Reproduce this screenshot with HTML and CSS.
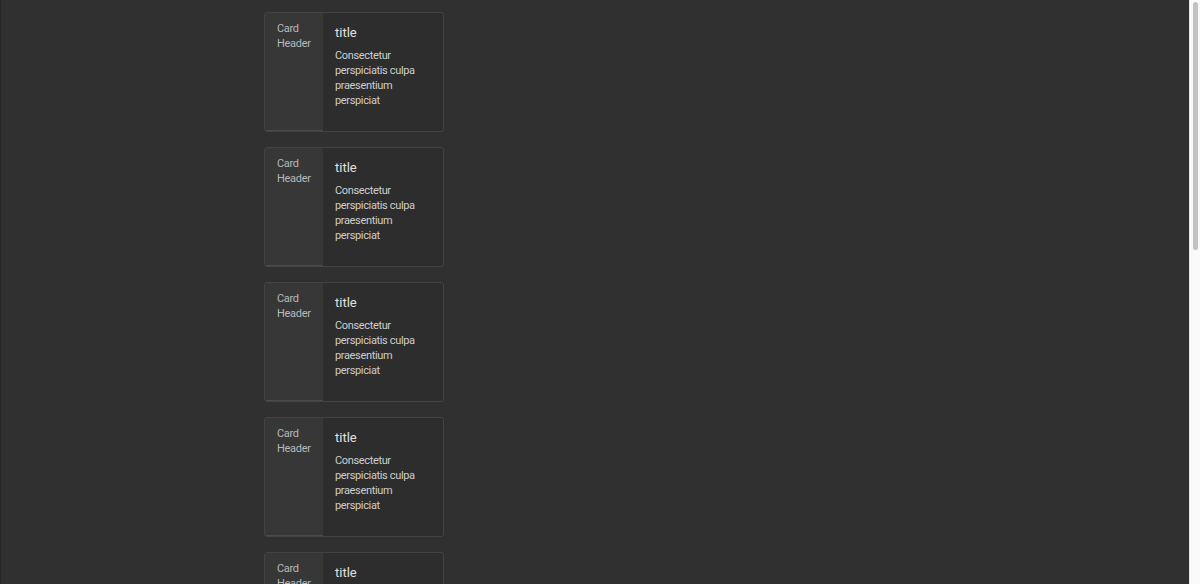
FILE: index.html
```html
<!DOCTYPE html>
<html lang="en">
<head>
    <meta charset="UTF-8">
    <meta name="viewport" content="width=device-width, initial-scale=1.0">
    <title>Cards</title>
    <link rel="stylesheet" href="styles.css">
</head>
<body>
    <div class="container">
        <div class="card">
            <div class="card-header">Card Header</div>
            <div class="card-body">
                <h3>title</h3>
                <p>Consectetur perspiciatis culpa praesentium perspiciat</p>
            </div>
        </div>
        <div class="card">
            <div class="card-header">Card Header</div>
            <div class="card-body">
                <h3>title</h3>
                <p>Consectetur perspiciatis culpa praesentium perspiciat</p>
            </div>
        </div>
        <div class="card">
            <div class="card-header">Card Header</div>
            <div class="card-body">
                <h3>title</h3>
                <p>Consectetur perspiciatis culpa praesentium perspiciat</p>
            </div>
        </div>
        <div class="card">
            <div class="card-header">Card Header</div>
            <div class="card-body">
                <h3>title</h3>
                <p>Consectetur perspiciatis culpa praesentium perspiciat</p>
            </div>
        </div>
        <div class="card">
            <div class="card-header">Card Header</div>
            <div class="card-body">
                <h3>title</h3>
                <p>Consectetur perspiciatis culpa praesentium perspiciat</p>
            </div>
        </div>
        <div class="card">
            <div class="card-header">Card Header</div>
            <div class="card-body">
                <h3>title</h3>
                <p>Consectetur perspiciatis culpa praesentium perspiciat</p>
            </div>
        </div>
        <div class="card">
            <div class="card-header">Card Header</div>
            <div class="card-body">
                <h3>title</h3>
                <p>Consectetur perspiciatis culpa praesentium perspiciat</p>
            </div>
        </div>
        <div class="card">
            <div class="card-header">Card Header</div>
            <div class="card-body">
                <h3>title</h3>
                <p>Consectetur perspiciatis culpa praesentium perspiciat</p>
            </div>
        </div>
        <div class="card">
            <div class="card-header">Card Header</div>
            <div class="card-body">
                <h3>title</h3>
                <p>Consectetur perspiciatis culpa praesentium perspiciat</p>
            </div>
        </div>
        <div class="card">
            <div class="card-header">Card Header</div>
            <div class="card-body">
                <h3>title</h3>
                <p>Consectetur perspiciatis culpa praesentium perspiciat</p>
            </div>
        </div>
    </div>

    <!-- barra de rolagem desenhada -->
    <div class="scroll-track"><div class="scroll-thumb"></div></div>
</body>
</html>
```

FILE: styles.css
```css
html {
    background-color: #303030;
}

body {
    font-family: Roboto, "Noto Sans", sans-serif;
    background-color: #303030;
    margin: 0 12px 0 0;
    box-shadow: inset 1px 0 0 #262626;
}

.container {
    max-width: 660px;
    margin: auto;
    padding: 12px 0;
    display: flex;
    flex-direction: column;
    gap: 15px;
}

.card {
    display: flex;
    width: 180px;
    height: 120px;
    box-sizing: border-box;
    border: 1px solid #434343;
    border-radius: 3px;
    background: #2d2d2d;
    overflow: hidden;
}

.card-header {
    width: 58px;
    flex-shrink: 0;
    box-sizing: border-box;
    padding: 8px 6px 0 12px;
    background: #373737;
    color: #b8b8b8;
    font-size: 11px;
    line-height: 15px;
    letter-spacing: -0.3px;
    box-shadow: inset 0 -1px 0 #4a4a4a;
}

.card-body {
    flex: 1;
    padding: 11px 10px 0 12px;
    color: #cdcdcd;
}

.card-body h3 {
    margin: 0 0 6px 0;
    font-size: 13px;
    font-weight: 400;
    line-height: 18px;
    color: #e0e0e0;
}

.card-body p {
    margin: 0;
    font-size: 11px;
    line-height: 15px;
    letter-spacing: -0.35px;
}

.scroll-track {
    position: fixed;
    top: 0;
    right: 0;
    width: 10px;
    height: 100%;
    background: #fafafa;
    border-left: 1px solid #e6e6e6;
}

.scroll-thumb {
    margin: 2px 0 0 3px;
    width: 5px;
    height: 248px;
    border-radius: 3px;
    background: #c2c2c2;
}
```
